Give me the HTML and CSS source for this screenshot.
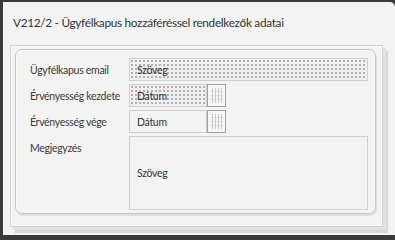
FILE: index.html
```html
<!DOCTYPE html>
<html>
<head>
    <title>V212/2</title>
    <link rel="stylesheet" href="styles.css">
</head>
<body>
    <div class="window">
        <div class="title">V212/2 - Ügyfélkapus hozzáféréssel rendelkezők adatai</div>
        <div class="group">
            <div class="panel">
                <div class="form">
                    <div class="label">Ügyfélkapus email</div>
                    <div class="field dotted wide">Szöveg</div>

                    <div class="label">Érvényesség kezdete</div>
                    <div class="date-row">
                        <div class="field dotted date">Dátum</div>
                        <div class="cal"></div>
                    </div>

                    <div class="label">Érvényesség vége</div>
                    <div class="date-row">
                        <div class="field date">Dátum</div>
                        <div class="cal"></div>
                    </div>

                    <div class="label top">Megjegyzés</div>
                    <div class="field memo">Szöveg</div>
                </div>
            </div>
        </div>
    </div>
</body>
</html>
```

FILE: styles.css
```css
body {
    margin: 0;
    background-color: #3a3a3a;
    font-family: Lato, "Noto Sans", sans-serif;
    color: #333;
    height: 240px;
    overflow: hidden;
}

.window {
    margin: 2px 0 0 3px;
    width: 392px;
    height: 233px;
    background-color: #f3f3f3;
    border-top-right-radius: 5px;
    box-sizing: border-box;
    padding-top: 12px;
}

.title {
    font-size: 11.8px;
    letter-spacing: -0.3px;
    padding-left: 10px;
    height: 31px;
    line-height: 18px;
    color: #333;
    white-space: nowrap;
}

.group {
    margin-left: 7px;
    width: 373px;
    height: 182px;
    box-sizing: border-box;
    border: 1px solid #d2d2d2;
    box-shadow: inset 0 0 0 1px #fafafa, 3px 3px 0 #e2e2e2, 5px 6px 0 #d6d6d6;
    padding: 3px 0 0 4px;
}

.panel {
    width: 361px;
    height: 165px;
    box-sizing: border-box;
    border: 1px solid #c6c6c6;
    border-radius: 7px;
    box-shadow: 1px 2px 0 #dedede, inset 1px 1px 0 #fbfbfb;
}

.form {
    display: grid;
    grid-template-columns: 99px 239px;
    row-gap: 3px;
    padding: 8px 0 0 14px;
    font-size: 10.5px;
    letter-spacing: -0.3px;
}

.label {
    display: flex;
    align-items: center;
    color: #3a3a3a;
    white-space: nowrap;
}

.label.top {
    align-items: flex-start;
    padding-top: 6px;
}

.field {
    box-sizing: border-box;
    height: 23px;
    border: 1px solid #cfcfcf;
    background-color: #f3f3f3;
    padding-left: 7px;
    display: flex;
    align-items: center;
    color: #333;
}

.dotted {
    background-color: #f0f0f0;
    background-image: radial-gradient(circle, #8e8e8e 0.6px, transparent 0.9px);
    background-size: 4px 4px;
}

.date-row {
    display: flex;
}

.date {
    width: 78px;
}

.cal {
    width: 19px;
    height: 23px;
    box-sizing: border-box;
    border: 1px solid #a0a0a0;
    background-color: #f6f6f6;
    background-image:
        repeating-linear-gradient(90deg, transparent 0 2px, #c9c9c9 2px 3px),
        repeating-linear-gradient(0deg, transparent 0 3px, #e0e0e0 3px 4px);
    background-size: 13px 15px;
    background-position: 2px 3px;
    background-repeat: no-repeat;
}

.memo {
    height: 74px;
}
```
